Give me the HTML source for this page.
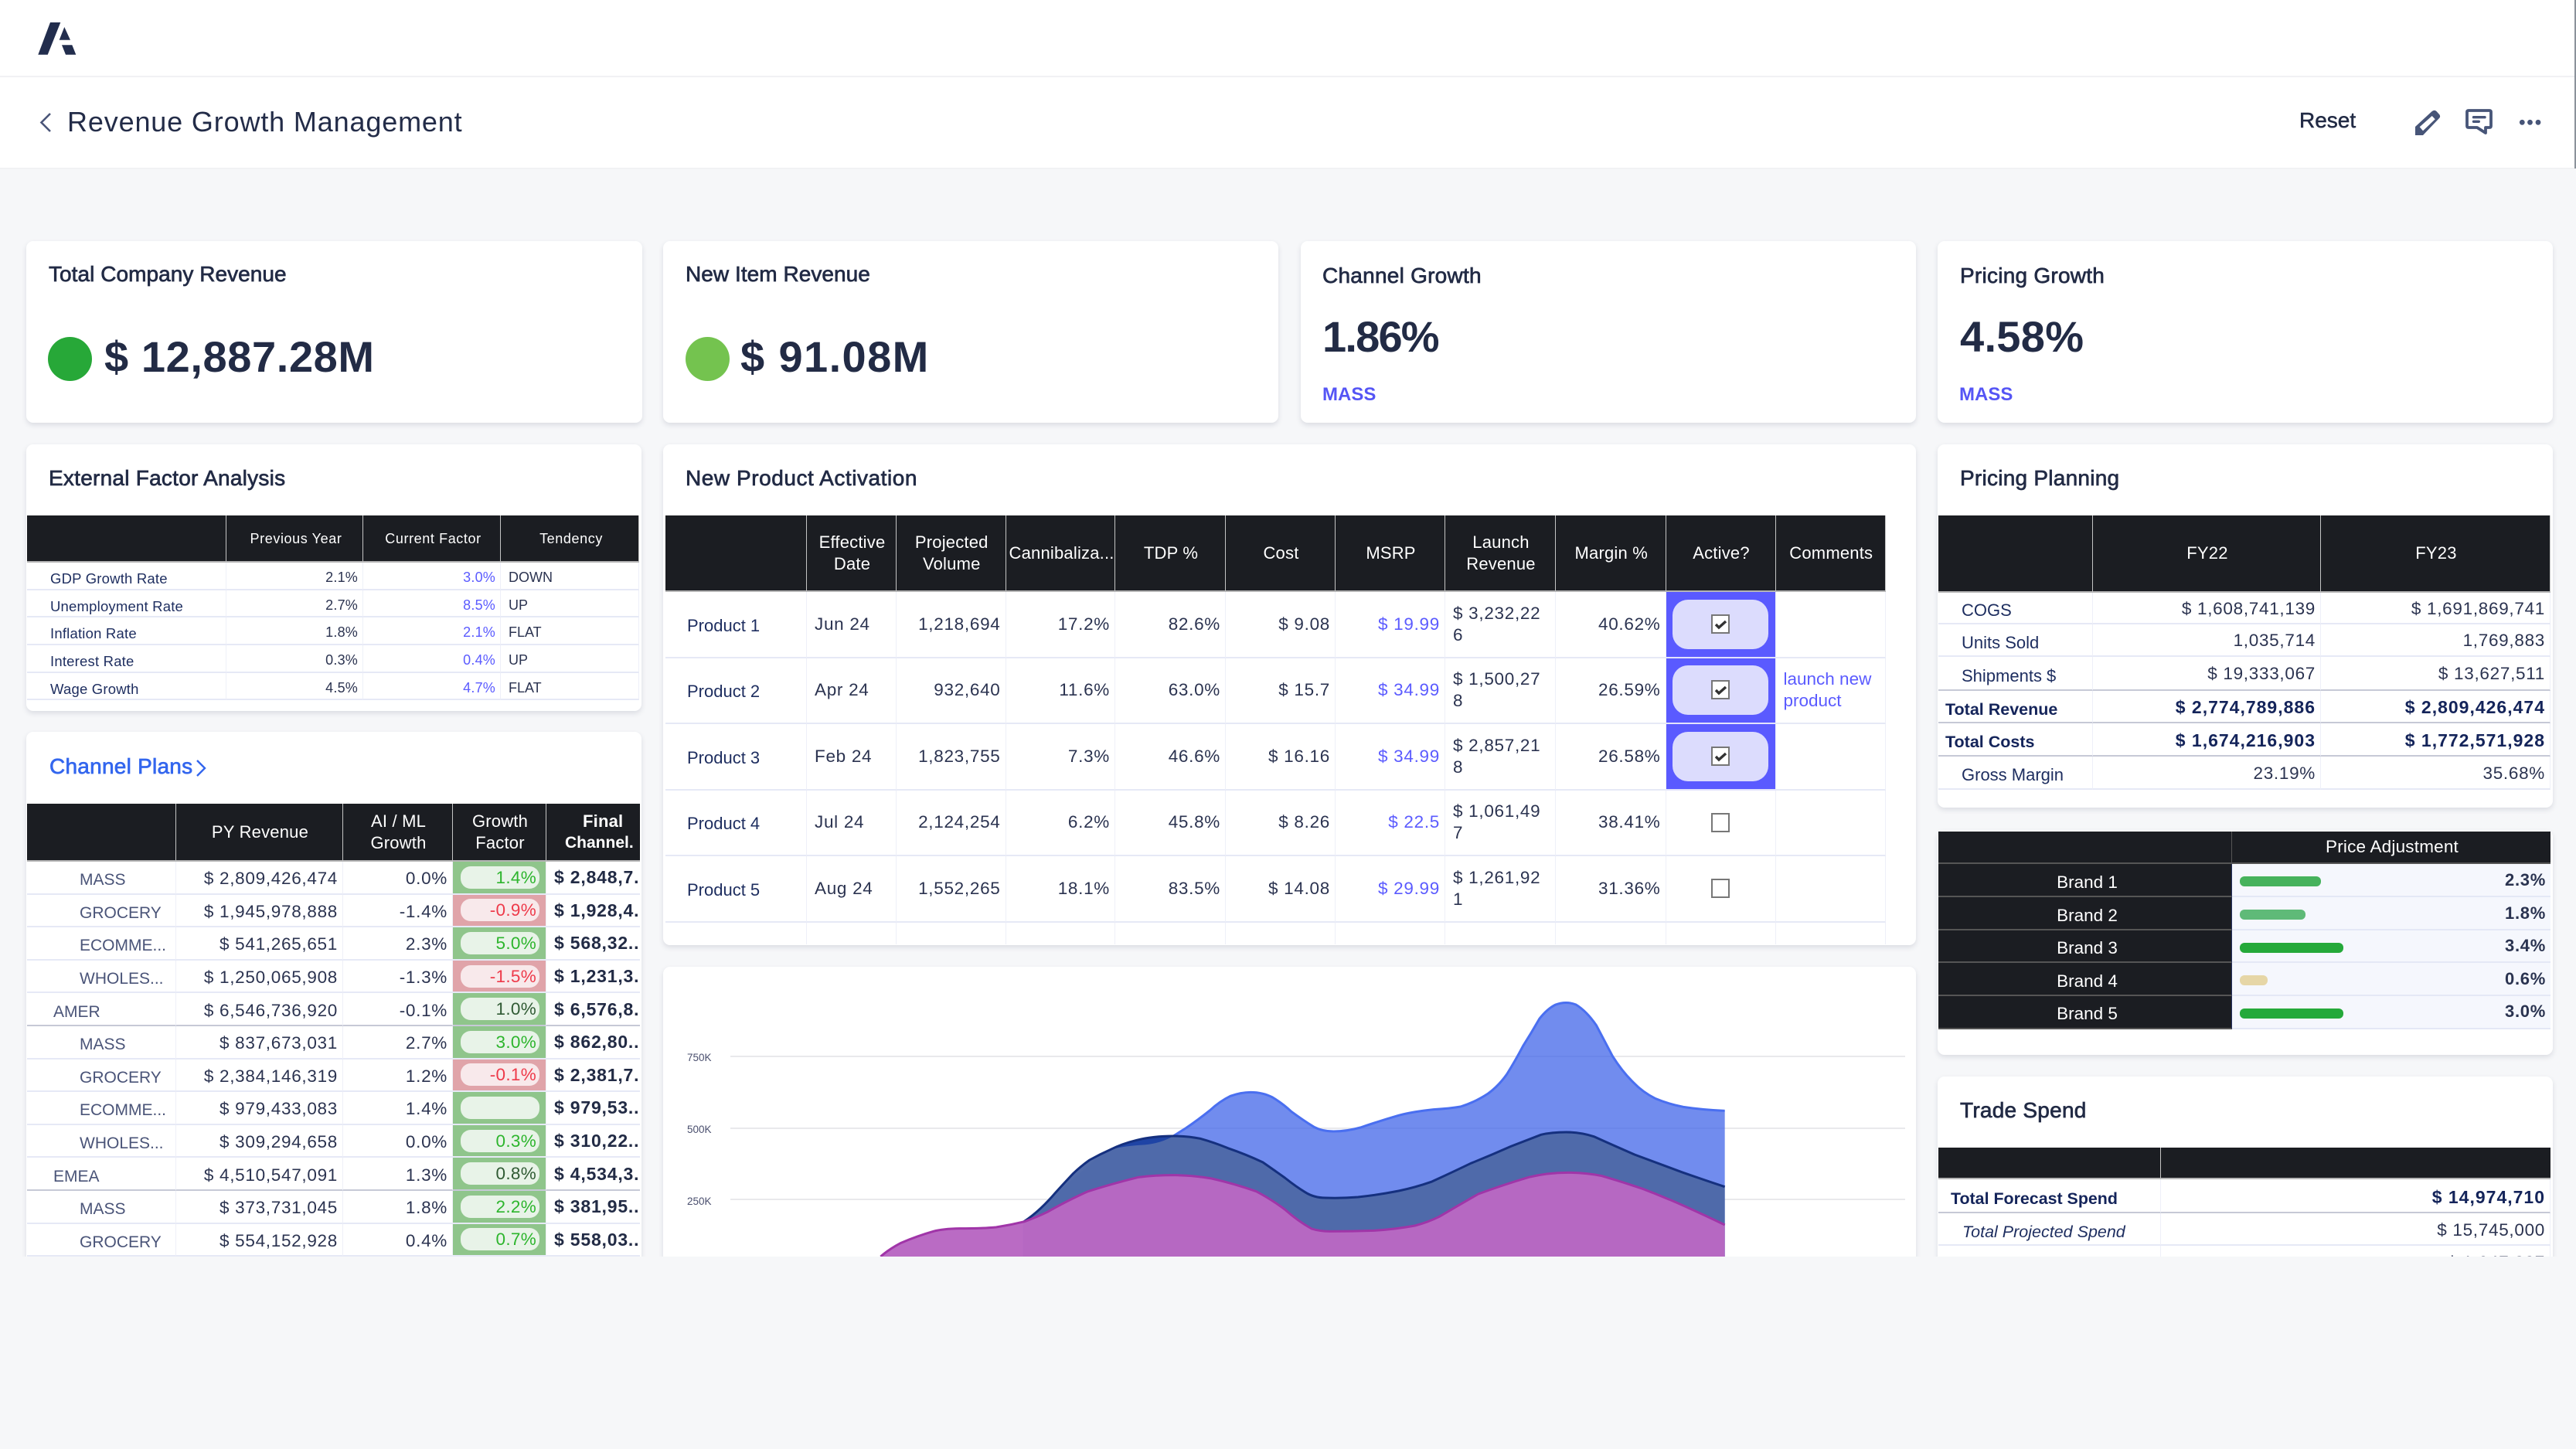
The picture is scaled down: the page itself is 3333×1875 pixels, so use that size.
<!DOCTYPE html>
<html lang="en"><head><meta charset="utf-8"><title>Revenue Growth Management</title>
<style>
html,body{margin:0;padding:0;width:3333px;height:1875px;overflow:hidden;background:#f6f7f9}
body{position:relative;font-family:"Liberation Sans",sans-serif;color:#2b3350}
#clip{position:absolute;left:0;top:0;width:3333px;height:1626px;overflow:hidden}
.bar{position:absolute;left:0;width:3333px;background:#fff}
.card{position:absolute;background:#fff;border-radius:9px;box-shadow:0 3px 7px rgba(40,50,80,.13)}
.a{position:absolute;line-height:40px;white-space:nowrap}
.t{font-size:28px;letter-spacing:.25px;-webkit-text-stroke:.7px;color:#222b45}
.big{font-size:56px;font-weight:700;color:#222b45;line-height:70px}
.mass{font-size:24px;font-weight:700;color:#5555f5}
.dot{position:absolute;width:57px;height:57px;border-radius:50%}
table{position:absolute;table-layout:fixed;border-collapse:separate;border-spacing:0}
th{background:#1b1d22;color:#fff;font-weight:400;font-size:22px;letter-spacing:.2px;line-height:28px;text-align:center;padding:0 2px 0 4px;border-right:1px solid #c4c4c4;border-bottom:2px solid #b5b5b5;white-space:nowrap;overflow:hidden}
td{padding:4px 6px 0 8px;font-size:22.5px;letter-spacing:.7px;line-height:28px;color:#2b3350;white-space:nowrap;overflow:hidden;border-right:1px solid #eef0f8;border-bottom:2px solid #e6e9f6;text-align:right;box-sizing:border-box}
td.l{text-align:left;letter-spacing:0;color:#1d2d5f;font-size:22px;padding-top:8px}
td.p{color:#5b5bff}
tr.d td{border-bottom-color:#c6c9d6}
.ext td{font-size:18px;letter-spacing:.2px;line-height:20px}
.ext td.l{font-size:18.5px;padding-left:30px}
.ext th{font-size:18px;letter-spacing:.6px;padding-left:6px}
.ext td.u{text-align:left;letter-spacing:0;padding-left:10px;color:#2b3350}
.ch td.l{color:#4a5478;padding-left:68px;font-size:21px;text-overflow:clip}
.ch td.r{padding-left:34px}
.ch td.f{font-weight:700;font-size:23px;text-align:left;padding:0 0 0 10px;letter-spacing:.8px;color:#222b45;border-right:0}
.ch td.g,.ch td.x{padding:0}
.ch td.g{background:#8fc58b}.ch td.x{background:#e0a4a9}
.pl{margin:0 8px 0 10px;height:29px;line-height:29px;border-radius:13px;background:#e8f3e8;text-align:right;padding-right:4px;color:#2db52d;letter-spacing:.3px}
.pl.k{color:#2f5a33}
.x .pl{background:#f8e9eb;color:#ee3a4a}
.pr td{padding-top:0}
.pr td.l{padding-left:28px;padding-top:4px}
.pr td.c{padding:0 0 0 10px;text-align:left}
.pr td.b{padding:0;background:#5a5aff;border-bottom-color:#e2e2fb}
.pr td.e{padding:0;text-align:center}
.pill{width:124px;height:64px;border-radius:20px;background:#dcdcfd;margin:0 auto;position:relative}
.cb{display:block;box-sizing:border-box;width:24px;height:25px;border:2px solid #777;background:#fff;position:relative;margin:0 auto}
.pill .cb{position:absolute;left:50px;top:19px}
.cb svg{position:absolute;left:-2px;top:-2px}
.fin td{padding-top:2px}
.fin td.l{padding-left:30px;padding-top:7px}
.fin td.o{padding-left:9px;font-weight:700;color:#14245a;font-size:21.5px}
.fin td.v,.ts td.v{font-weight:700;color:#14245a;font-size:23px;letter-spacing:1px}
.br td.n{background:#1b1d22;color:#fff;text-align:center;font-size:22.5px;letter-spacing:0;border-right:1px solid #24305f;border-bottom:2px solid #555;padding-top:6px;padding-left:12px}
.br td.w{background:#f5f7fd;position:relative;font-weight:700;font-size:22px;color:#2a3350;border-bottom-color:#e4e8f6;border-right:0;padding-top:0}
.bb{position:absolute;left:10px;top:16px;height:13px;border-radius:6px}
.ts td.l{padding-left:16px;font-weight:700;color:#14245a;font-size:21.4px}
.ts td.i{font-style:italic;padding-left:31px;color:#1d2d5f;font-weight:400;font-size:21.5px}
</style></head><body>
<div id="clip">
<div class="bar" style="top:0;height:98px;border-bottom:2px solid #f1f1f4"></div>
<div class="bar" style="top:100px;height:117px;border-bottom:2px solid #f1f2f4"></div>
<svg style="position:absolute;left:0;top:0" width="110" height="90" viewBox="0 0 110 90"><path fill="#222d4d" d="M65 29H78.3L61.7 70.7H49.3ZM83.3 35 91 51.7H76.7ZM80 58.3H93.3L98.3 70.7H85Z"/></svg>
<svg style="position:absolute;left:40px;top:140px" width="40" height="40" viewBox="40 140 40 40"><path fill="none" stroke="#4a5578" stroke-width="2.6" d="M65 147 53.5 158.5 65 170"/></svg>
<div class="a" style="left:87px;top:138px;font-size:36px;letter-spacing:.85px;color:#232c48">Revenue Growth Management</div>
<div class="a" style="left:2975px;top:136px;font-size:28px;-webkit-text-stroke:.5px;color:#222b45">Reset</div>
<svg style="position:absolute;left:3110px;top:130px" width="200" height="56" viewBox="3110 130 200 56">
<path fill="#475578" fill-rule="evenodd" d="M3125 175V164L3146.7 144Q3150 141.5 3152.5 144L3156.5 148.5Q3158 151 3156 153L3135 175ZM3130.7 164.3 3135 169.3 3150.7 154.3 3146.7 150Z"/>
<path fill="none" stroke="#475578" stroke-width="3.8" stroke-linejoin="round" d="M3194 143H3221Q3223 143 3223 145V163Q3223 165 3221 165H3216V172L3205 165H3194Q3192 165 3192 163V145Q3192 143 3194 143Z"/>
<path fill="none" stroke="#475578" stroke-width="3.4" stroke-linecap="round" d="M3200.5 151.7H3215M3200.5 157.3H3207.3"/>
<circle cx="3263.3" cy="158.3" r="3.4" fill="#475578"/><circle cx="3273.5" cy="158.3" r="3.4" fill="#475578"/><circle cx="3284" cy="158.3" r="3.4" fill="#475578"/>
</svg>
<div style="position:absolute;left:3331px;top:0;width:2px;height:218px;background:#8b929b"></div>

<!-- KPI cards -->
<div class="card" style="left:34px;top:312px;width:797px;height:235px"></div>
<div class="a t" style="left:63px;top:335px;letter-spacing:.05px">Total Company Revenue</div>
<div class="dot" style="left:62px;top:436px;background:#27a838"></div>
<div class="a big" style="left:135px;top:427px;letter-spacing:.6px">$ 12,887.28M</div>
<div class="card" style="left:858px;top:312px;width:796px;height:235px"></div>
<div class="a t" style="left:887px;top:335px;letter-spacing:.05px">New Item Revenue</div>
<div class="dot" style="left:887px;top:436px;background:#74c34f"></div>
<div class="a big" style="left:958px;top:427px;letter-spacing:1.4px">$ 91.08M</div>
<div class="card" style="left:1683px;top:312px;width:796px;height:235px"></div>
<div class="a t" style="left:1711px;top:337px">Channel Growth</div>
<div class="a big" style="left:1711px;top:401px;letter-spacing:-1.8px">1.86%</div>
<div class="a mass" style="left:1711px;top:491px">MASS</div>
<div class="card" style="left:2507px;top:312px;width:796px;height:235px"></div>
<div class="a t" style="left:2536px;top:337px">Pricing Growth</div>
<div class="a big" style="left:2536px;top:401px;letter-spacing:.3px">4.58%</div>
<div class="a mass" style="left:2535px;top:491px">MASS</div>

<!-- External factor -->
<div class="card" style="left:34px;top:575px;width:796px;height:345px"></div>
<div class="a t" style="left:63px;top:599px">External Factor Analysis</div>
<table class="ext" style="left:35px;top:667px;width:792px">
<colgroup><col style="width:258px"><col style="width:177px"><col style="width:178px"><col style="width:179px"></colgroup>
<tr style="height:61px"><th></th><th>Previous Year</th><th>Current Factor</th><th>Tendency</th></tr>
<tr style="height:36px"><td class="l">GDP Growth Rate</td><td>2.1%</td><td class="p">3.0%</td><td class="u">DOWN</td></tr>
<tr style="height:35px"><td class="l">Unemployment Rate</td><td>2.7%</td><td class="p">8.5%</td><td class="u">UP</td></tr>
<tr style="height:36px"><td class="l">Inflation Rate</td><td>1.8%</td><td class="p">2.1%</td><td class="u">FLAT</td></tr>
<tr style="height:36px"><td class="l">Interest Rate</td><td>0.3%</td><td class="p">0.4%</td><td class="u">UP</td></tr>
<tr style="height:35px"><td class="l">Wage Growth</td><td>4.5%</td><td class="p">4.7%</td><td class="u">FLAT</td></tr>
</table>

<!-- Channel plans -->
<div class="card" style="left:34px;top:947px;width:796px;height:760px"></div>
<div class="a t" style="left:64px;top:972px;color:#3366ee;-webkit-text-stroke:.7px #3366ee">Channel Plans</div>
<svg style="position:absolute;left:250px;top:980px" width="20" height="28" viewBox="0 0 20 28"><path fill="none" stroke="#3366ee" stroke-width="2.4" d="M5 4 15 14 5 24"/></svg>
<table class="ch" style="left:35px;top:1040px;width:793px">
<colgroup><col style="width:193px"><col style="width:216px"><col style="width:142px"><col style="width:121px"><col style="width:121px"></colgroup>
<tr style="height:75px"><th></th><th>PY Revenue</th><th>AI / ML<br>Growth</th><th>Growth<br>Factor</th><th style="font-weight:700;border-right:0;padding:0;text-align:left"><span style="display:block;padding-left:47px">Final</span><span style="display:block;padding-left:24px;font-size:21px;letter-spacing:0">Channel.</span></th></tr>
<tr style="height:42.6px"><td class="l">MASS</td><td>$ 2,809,426,474</td><td>0.0%</td><td class="g"><div class="pl">1.4%</div></td><td class="f">$ 2,848,7..</td></tr>
<tr style="height:42.6px"><td class="l">GROCERY</td><td>$ 1,945,978,888</td><td>-1.4%</td><td class="x"><div class="pl">-0.9%</div></td><td class="f">$ 1,928,4..</td></tr>
<tr style="height:42.6px"><td class="l">ECOMME...</td><td>$ 541,265,651</td><td>2.3%</td><td class="g"><div class="pl">5.0%</div></td><td class="f">$ 568,32..</td></tr>
<tr style="height:42.6px"><td class="l">WHOLES...</td><td>$ 1,250,065,908</td><td>-1.3%</td><td class="x"><div class="pl">-1.5%</div></td><td class="f">$ 1,231,3..</td></tr>
<tr class="d" style="height:42.6px"><td class="l r">AMER</td><td>$ 6,546,736,920</td><td>-0.1%</td><td class="g"><div class="pl k">1.0%</div></td><td class="f">$ 6,576,8..</td></tr>
<tr style="height:42.6px"><td class="l">MASS</td><td>$ 837,673,031</td><td>2.7%</td><td class="g"><div class="pl">3.0%</div></td><td class="f">$ 862,80..</td></tr>
<tr style="height:42.6px"><td class="l">GROCERY</td><td>$ 2,384,146,319</td><td>1.2%</td><td class="x"><div class="pl">-0.1%</div></td><td class="f">$ 2,381,7..</td></tr>
<tr style="height:42.6px"><td class="l">ECOMME...</td><td>$ 979,433,083</td><td>1.4%</td><td class="g"><div class="pl"></div></td><td class="f">$ 979,53..</td></tr>
<tr style="height:42.6px"><td class="l">WHOLES...</td><td>$ 309,294,658</td><td>0.0%</td><td class="g"><div class="pl">0.3%</div></td><td class="f">$ 310,22..</td></tr>
<tr class="d" style="height:42.6px"><td class="l r">EMEA</td><td>$ 4,510,547,091</td><td>1.3%</td><td class="g"><div class="pl k">0.8%</div></td><td class="f">$ 4,534,3..</td></tr>
<tr style="height:42.6px"><td class="l">MASS</td><td>$ 373,731,045</td><td>1.8%</td><td class="g"><div class="pl">2.2%</div></td><td class="f">$ 381,95..</td></tr>
<tr style="height:42.6px"><td class="l">GROCERY</td><td>$ 554,152,928</td><td>0.4%</td><td class="g"><div class="pl">0.7%</div></td><td class="f">$ 558,03..</td></tr>
</table>

<!-- New Product Activation -->
<div class="card" style="left:858px;top:575px;width:1621px;height:648px"></div>
<div class="a t" style="left:887px;top:599px;letter-spacing:.55px">New Product Activation</div>
<table class="pr" style="left:861px;top:667px;width:1579px">
<colgroup><col style="width:183px"><col style="width:116px"><col style="width:141.5px"><col style="width:141.5px"><col style="width:143px"><col style="width:142px"><col style="width:142px"><col style="width:143px"><col style="width:142.5px"><col style="width:142px"><col style="width:142.5px"></colgroup>
<tr style="height:99px"><th></th><th>Effective<br>Date</th><th>Projected<br>Volume</th><th>Cannibaliza...</th><th>TDP %</th><th>Cost</th><th>MSRP</th><th>Launch<br>Revenue</th><th>Margin %</th><th>Active?</th><th>Comments</th></tr>
<tr style="height:85.5px"><td class="l">Product 1</td><td class="c">Jun 24</td><td>1,218,694</td><td>17.2%</td><td>82.6%</td><td>$ 9.08</td><td class="p">$ 19.99</td><td class="c">$ 3,232,22<br>6</td><td>40.62%</td><td class="b"><div class="pill"><span class="cb"><svg width="24" height="25"><path fill="none" stroke="#333" stroke-width="3.4" d="M6 13 10 17 19 9"/></svg></span></div></td><td class="c p"></td></tr>
<tr style="height:85.5px"><td class="l">Product 2</td><td class="c">Apr 24</td><td>932,640</td><td>11.6%</td><td>63.0%</td><td>$ 15.7</td><td class="p">$ 34.99</td><td class="c">$ 1,500,27<br>8</td><td>26.59%</td><td class="b"><div class="pill"><span class="cb"><svg width="24" height="25"><path fill="none" stroke="#333" stroke-width="3.4" d="M6 13 10 17 19 9"/></svg></span></div></td><td class="c p" style="letter-spacing:0">launch new<br>product</td></tr>
<tr style="height:85.5px"><td class="l">Product 3</td><td class="c">Feb 24</td><td>1,823,755</td><td>7.3%</td><td>46.6%</td><td>$ 16.16</td><td class="p">$ 34.99</td><td class="c">$ 2,857,21<br>8</td><td>26.58%</td><td class="b"><div class="pill"><span class="cb"><svg width="24" height="25"><path fill="none" stroke="#333" stroke-width="3.4" d="M6 13 10 17 19 9"/></svg></span></div></td><td class="c p"></td></tr>
<tr style="height:85.5px"><td class="l">Product 4</td><td class="c">Jul 24</td><td>2,124,254</td><td>6.2%</td><td>45.8%</td><td>$ 8.26</td><td class="p">$ 22.5</td><td class="c">$ 1,061,49<br>7</td><td>38.41%</td><td class="e"><span class="cb"></span></td><td class="c p"></td></tr>
<tr style="height:85.5px"><td class="l">Product 5</td><td class="c">Aug 24</td><td>1,552,265</td><td>18.1%</td><td>83.5%</td><td>$ 14.08</td><td class="p">$ 29.99</td><td class="c">$ 1,261,92<br>1</td><td>31.36%</td><td class="e"><span class="cb"></span></td><td class="c p"></td></tr>
<tr style="height:28px"><td style="border-bottom:0"></td><td style="border-bottom:0"></td><td style="border-bottom:0"></td><td style="border-bottom:0"></td><td style="border-bottom:0"></td><td style="border-bottom:0"></td><td style="border-bottom:0"></td><td style="border-bottom:0"></td><td style="border-bottom:0"></td><td style="border-bottom:0"></td><td style="border-bottom:0"></td></tr>
</table>

<!-- Chart -->
<div class="card" style="left:858px;top:1251px;width:1621px;height:460px"></div>
<div style="position:absolute;left:945px;top:1366px;width:1520px;height:2px;background:#e9e9ec"></div>
<div style="position:absolute;left:945px;top:1459px;width:1520px;height:2px;background:#e9e9ec"></div>
<div style="position:absolute;left:945px;top:1551px;width:1520px;height:2px;background:#e9e9ec"></div>
<div class="a" style="left:889px;top:1349px;font-size:13.5px;color:#4a4f6e">750K</div>
<div class="a" style="left:889px;top:1442px;font-size:13.5px;color:#4a4f6e">500K</div>
<div class="a" style="left:889px;top:1535px;font-size:13.5px;color:#4a4f6e">250K</div>
<svg style="position:absolute;left:850px;top:1240px" width="1650" height="386" viewBox="0 0 1568 1158" preserveAspectRatio="none">
<path fill="#3f64e8" fill-opacity=".74" d="M450,1025 L550,752 Q575,728 600,724 Q620,718 635,690 L650,660 Q665,628 680,590 Q692,555 705,535 Q718,520 730,520 Q745,520 757,540 Q770,565 780,595 Q795,630 808,655 Q818,672 832,672 Q848,672 865,657 Q888,632 912,610 Q930,595 955,587 Q975,583 988,576 Q1005,560 1022,525 Q1035,495 1045,450 Q1055,400 1065,340 Q1075,290 1085,235 Q1095,195 1105,180 Q1118,165 1130,180 Q1143,205 1155,260 Q1165,320 1175,380 Q1187,440 1200,480 Q1212,520 1228,545 Q1243,565 1262,577 Q1285,588 1313,592 L1313,1158 L450,1158 Z"/>
<path fill="none" stroke="#4a6ff0" stroke-width="3" vector-effect="non-scaling-stroke" d="M635,690 L650,660 Q665,628 680,590 Q692,555 705,535 Q718,520 730,520 Q745,520 757,540 Q770,565 780,595 Q795,630 808,655 Q818,672 832,672 Q848,672 865,657 Q888,632 912,610 Q930,595 955,587 Q975,583 988,576 Q1005,560 1022,525 Q1035,495 1045,450 Q1055,400 1065,340 Q1075,290 1085,235 Q1095,195 1105,180 Q1118,165 1130,180 Q1143,205 1155,260 Q1165,320 1175,380 Q1187,440 1200,480 Q1212,520 1228,545 Q1243,565 1262,577 Q1285,588 1313,592"/>
<path fill="#4f69a8" fill-opacity=".98" d="M450,1025 Q462,1000 472,970 Q482,940 490,910 Q500,875 512,835 Q522,805 532,783 Q545,760 558,742 Q572,720 590,706 Q610,690 635,690 Q652,690 668,700 Q685,715 702,737 Q725,762 745,792 Q760,825 772,852 Q785,885 797,908 Q808,930 822,930 Q842,932 862,927 Q888,918 912,903 Q932,890 952,868 Q975,835 1000,797 Q1025,765 1050,730 Q1068,708 1087,685 Q1100,675 1118,675 Q1135,675 1152,692 Q1175,725 1202,762 Q1230,795 1260,830 Q1287,860 1313,887 L1313,1158 L450,1158 Z"/>
<path fill="#1f44a5" d="M558,742 Q572,720 590,706 Q610,690 635,690 Q620,718 600,724 Q575,728 558,742Z"/>
<path fill="none" stroke="#15307f" stroke-width="3" vector-effect="non-scaling-stroke" d="M450,1025 Q462,1000 472,970 Q482,940 490,910 Q500,875 512,835 Q522,805 532,783 Q545,760 558,742 Q572,720 590,706 Q610,690 635,690 Q652,690 668,700 Q685,715 702,737 Q725,762 745,792 Q760,825 772,852 Q785,885 797,908 Q808,930 822,930 Q842,932 862,927 Q888,918 912,903 Q932,890 952,868 Q975,835 1000,797 Q1025,765 1050,730 Q1068,708 1087,685 Q1100,675 1118,675 Q1135,675 1152,692 Q1175,725 1202,762 Q1230,795 1260,830 Q1287,860 1313,887"/>
<path fill="#b968c3" fill-opacity=".98" d="M275,1158 Q285,1130 300,1105 Q320,1078 340,1060 Q352,1050 372,1049 Q400,1049 417,1044 Q435,1035 452,1022 Q467,1005 480,985 Q505,940 530,905 Q560,875 592,850 Q612,842 637,842 Q660,843 682,855 Q710,875 737,905 Q755,935 772,975 Q788,1020 805,1050 Q815,1060 827,1060 Q855,1060 882,1057 Q908,1052 932,1038 Q948,1025 962,1003 Q985,960 1010,915 Q1040,880 1072,850 Q1095,832 1120,832 Q1142,832 1162,845 Q1187,868 1212,895 Q1237,925 1262,960 Q1290,1000 1313,1035 L1313,1158 Z"/>
<path fill="none" stroke="#a035a8" stroke-width="3" vector-effect="non-scaling-stroke" d="M275,1158 Q285,1130 300,1105 Q320,1078 340,1060 Q352,1050 372,1049 Q400,1049 417,1044 Q435,1035 452,1022 Q467,1005 480,985 Q505,940 530,905 Q560,875 592,850 Q612,842 637,842 Q660,843 682,855 Q710,875 737,905 Q755,935 772,975 Q788,1020 805,1050 Q815,1060 827,1060 Q855,1060 882,1057 Q908,1052 932,1038 Q948,1025 962,1003 Q985,960 1010,915 Q1040,880 1072,850 Q1095,832 1120,832 Q1142,832 1162,845 Q1187,868 1212,895 Q1237,925 1262,960 Q1290,1000 1313,1035"/>
</svg>

<!-- Pricing Planning -->
<div class="card" style="left:2507px;top:575px;width:796px;height:470px"></div>
<div class="a t" style="left:2536px;top:599px">Pricing Planning</div>
<table class="fin" style="left:2508px;top:667px;width:792px">
<colgroup><col style="width:200px"><col style="width:295px"><col style="width:297px"></colgroup>
<tr style="height:100px"><th></th><th>FY22</th><th>FY23</th></tr>
<tr style="height:41px"><td class="l">COGS</td><td>$ 1,608,741,139</td><td>$ 1,691,869,741</td></tr>
<tr style="height:42px"><td class="l">Units Sold</td><td>1,035,714</td><td>1,769,883</td></tr>
<tr class="d" style="height:44px"><td class="l">Shipments $</td><td>$ 19,333,067</td><td>$ 13,627,511</td></tr>
<tr class="d" style="height:42px"><td class="l o">Total Revenue</td><td class="v">$ 2,774,789,886</td><td class="v">$ 2,809,426,474</td></tr>
<tr class="d" style="height:43px"><td class="l o">Total Costs</td><td class="v">$ 1,674,216,903</td><td class="v">$ 1,772,571,928</td></tr>
<tr style="height:43px"><td class="l">Gross Margin</td><td>23.19%</td><td>35.68%</td></tr>
</table>

<!-- Brand -->
<div class="card" style="left:2507px;top:1074px;width:796px;height:291px"></div>
<table class="br" style="left:2508px;top:1076px;width:792px">
<colgroup><col style="width:380px"><col style="width:412px"></colgroup>
<tr style="height:42px"><th style="border-right-color:#555;border-bottom-color:#555"></th><th style="border-right:0;border-bottom-color:#555;font-size:22.5px">Price Adjustment</th></tr>
<tr style="height:43.3px"><td class="n">Brand 1</td><td class="w"><span class="bb" style="width:105px;background:#46b25c"></span>2.3%</td></tr>
<tr style="height:42.6px"><td class="n">Brand 2</td><td class="w"><span class="bb" style="width:85px;background:#5fba78"></span>1.8%</td></tr>
<tr style="height:42.6px"><td class="n">Brand 3</td><td class="w"><span class="bb" style="width:134px;background:#25a93a"></span>3.4%</td></tr>
<tr style="height:42.6px"><td class="n">Brand 4</td><td class="w"><span class="bb" style="width:36px;background:#e6d6a6"></span>0.6%</td></tr>
<tr style="height:42.6px"><td class="n">Brand 5</td><td class="w"><span class="bb" style="width:134px;background:#25a93a"></span>3.0%</td></tr>
</table>

<!-- Trade -->
<div class="card" style="left:2507px;top:1393px;width:796px;height:320px"></div>
<div class="a t" style="left:2536px;top:1417px">Trade Spend</div>
<table class="ts" style="left:2508px;top:1485px;width:792px">
<colgroup><col style="width:288px"><col style="width:504px"></colgroup>
<tr style="height:41px"><th></th><th style="border-right:0"></th></tr>
<tr class="d" style="height:44px"><td class="l">Total Forecast Spend</td><td class="v">$ 14,974,710</td></tr>
<tr style="height:42px"><td class="l i">Total Projected Spend</td><td>$ 15,745,000</td></tr>
<tr style="height:42px"><td class="l i"></td><td>$ 1,047,887</td></tr>
</table>
</div>
</body></html>
